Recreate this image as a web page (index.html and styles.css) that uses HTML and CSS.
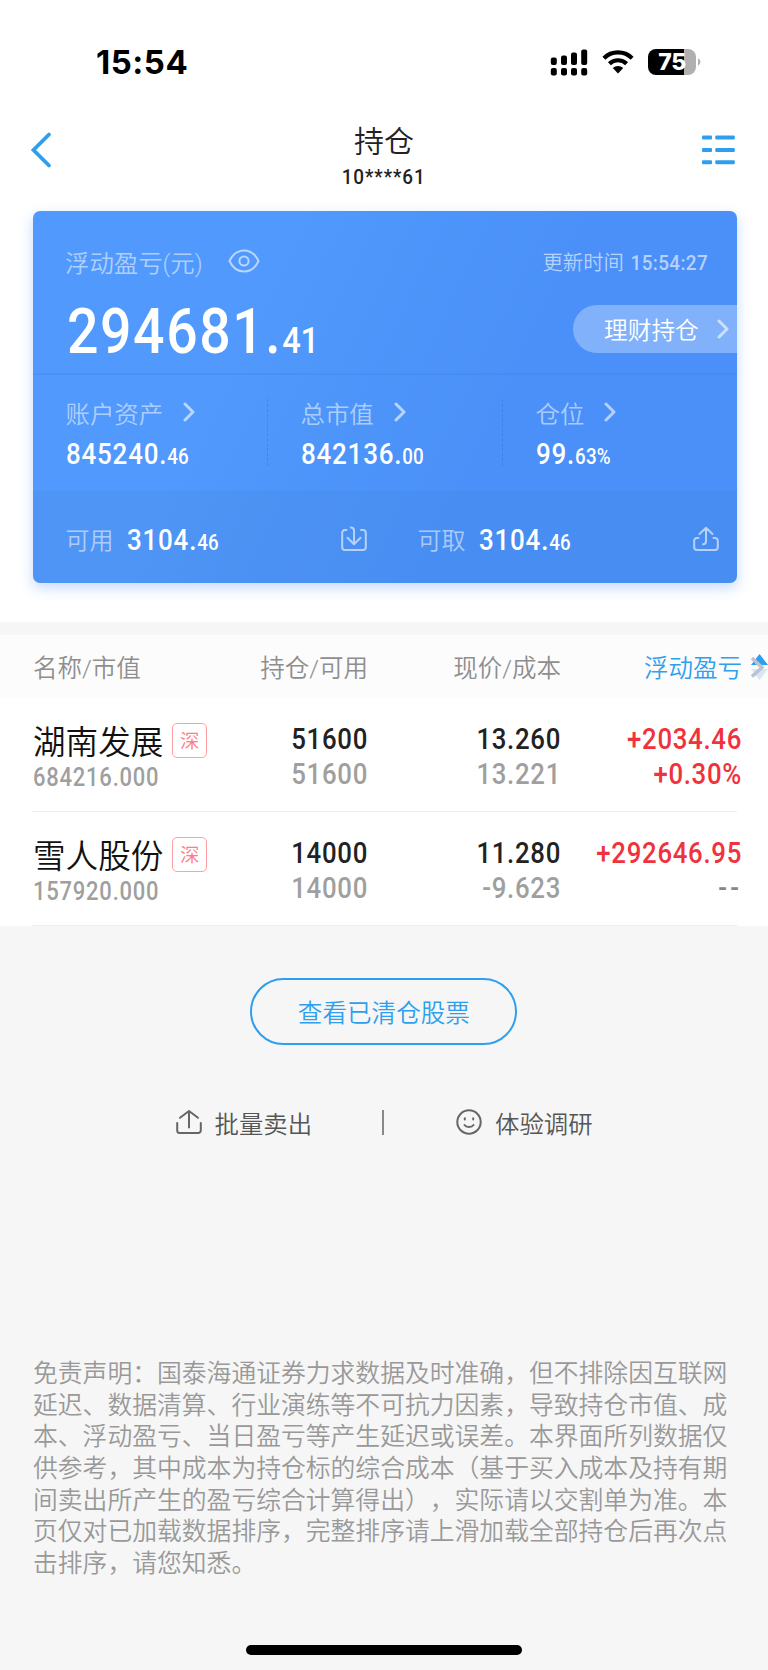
FILE: index.html
```html
<!DOCTYPE html>
<html lang="zh-CN">
<head>
  <meta charset="UTF-8" />
  <meta name="viewport" content="width=device-width, initial-scale=1.0"/>
  <title>持仓</title>
  <link rel="stylesheet" href="styles.css">
</head>
<body>
  <div class="top">
    <div class="status-bar">
      <span class="clock">15:54</span>
      <div class="status-icons">
        <svg class="signal" width="38" height="28" viewBox="0 0 38 28">
          <rect x="0.8" y="8.5" width="6" height="7.5" rx="2"/>
          <rect x="11" y="6.5" width="6" height="9.5" rx="2"/>
          <rect x="21" y="3.5" width="6" height="12.5" rx="2"/>
          <rect x="31.2" y="0.5" width="6" height="15.5" rx="2"/>
          <rect x="0.8" y="19" width="6" height="7.4" rx="2"/>
          <rect x="11" y="19" width="6" height="7.4" rx="2"/>
          <rect x="21" y="19" width="6" height="7.4" rx="2"/>
          <rect x="31.2" y="19" width="6" height="7.4" rx="2"/>
        </svg>
        <svg class="wifi" width="32" height="26" viewBox="0 0 32 26">
          <path d="M1.9 9.2a20.2 20.2 0 0 1 28.2 0M7.4 14.7a12.4 12.4 0 0 1 17.2 0" fill="none" stroke="#000" stroke-width="4.2"/>
          <path d="M10.8 19a7.6 7.6 0 0 1 10.4 0L16 24.6z"/>
        </svg>
        <div class="battery"><span>75</span></div>
        <svg class="battery-cap" width="3" height="8" viewBox="0 0 3 8"><path d="M0 0.3a4 4 0 0 1 0 7.4z" fill="#b0b0b0"/></svg>
      </div>
    </div>

    <div class="nav">
      <svg class="back" width="22" height="38" viewBox="0 0 22 38">
        <path d="M19 3.5L3.5 19l15.5 15.5" fill="none" stroke="#2e9fee" stroke-width="3.8" stroke-linecap="round"/>
      </svg>
      <div class="title">
        <h1>持仓</h1>
        <p>10****61</p>
      </div>
      <svg class="list" width="33" height="30" viewBox="0 0 33 30" fill="#2e9fee">
        <rect x="0" y="0.5" width="10" height="4" rx="1"/><rect x="13.3" y="0.5" width="19.5" height="4" rx="1"/>
        <rect x="0" y="13" width="10" height="4" rx="1"/><rect x="13.3" y="13" width="19.5" height="4" rx="1"/>
        <rect x="0" y="25.3" width="10" height="4" rx="1"/><rect x="13.3" y="25.3" width="19.5" height="4" rx="1"/>
      </svg>
    </div>

    <div class="card">
      <div class="summary">
        <div class="summary-head">
          <span class="label">浮动盈亏(元)</span>
          <svg class="eye" width="32" height="24" viewBox="0 0 32 24">
            <path d="M1.5 12C4.5 5.5 9 1.5 16 1.5S27.5 5.5 30.5 12C27.5 18.5 23 22.5 16 22.5S4.5 18.5 1.5 12z"/>
            <circle cx="16" cy="12" r="4.6"/>
          </svg>
          <span class="update">更新时间<b>15:54:27</b></span>
        </div>
        <div class="summary-main">
          <span class="profit">294681.<small>41</small></span>
          <span class="pill">理财持仓
            <svg class="arrow" width="12" height="20" viewBox="0 0 12 20"><path d="M2 2l8 8-8 8"/></svg>
          </span>
        </div>
      </div>

      <div class="stats">
        <div class="stat">
          <span class="label">账户资产 <svg class="arrow" width="12" height="20" viewBox="0 0 12 20"><path d="M2 2l8 8-8 8"/></svg></span>
          <span class="num">845240.<small>46</small></span>
        </div>
        <div class="stat">
          <span class="label">总市值 <svg class="arrow" width="12" height="20" viewBox="0 0 12 20"><path d="M2 2l8 8-8 8"/></svg></span>
          <span class="num">842136.<small>00</small></span>
        </div>
        <div class="stat">
          <span class="label">仓位 <svg class="arrow" width="12" height="20" viewBox="0 0 12 20"><path d="M2 2l8 8-8 8"/></svg></span>
          <span class="num">99.<small>63%</small></span>
        </div>
      </div>

      <div class="funds">
        <div class="fund">
          <span class="label">可用</span>
          <span class="num">3104.<small>46</small></span>
          <svg class="fund-icon" width="26" height="26" viewBox="0 0 26 26">
            <path d="M5.5 4H4a2.8 2.8 0 0 0-2.8 2.8v14.4A2.8 2.8 0 0 0 4 24h18a2.8 2.8 0 0 0 2.8-2.8V6.8A2.8 2.8 0 0 0 22 4h-2M9.8 1.5c2.4 0 3.2 1 3.2 3V18M6.5 11.8L13 18.2l6.5-6.4"/>
          </svg>
        </div>
        <div class="fund">
          <span class="label">可取</span>
          <span class="num">3104.<small>46</small></span>
          <svg class="fund-icon" width="26" height="26" viewBox="0 0 26 26">
            <path d="M5.5 12H4a2.8 2.8 0 0 0-2.8 2.8v6.4A2.8 2.8 0 0 0 4 24h18a2.8 2.8 0 0 0 2.8-2.8v-6.4A2.8 2.8 0 0 0 22 12h-1.5M10 18.3c2.2 0 3-1.3 3-3.3V2M6.5 8L13 1.8 19.5 8"/>
          </svg>
        </div>
      </div>
    </div>
  </div>

  <div class="holdings">
    <div class="row head">
      <span>名称/市值</span>
      <span>持仓/可用</span>
      <span>现价/成本</span>
      <span class="active">浮动盈亏</span>
      <svg class="sort" width="17" height="28" viewBox="0 0 17 28">
        <path d="M8.5 0L17 11H0z" fill="#2e9fee"/>
        <path d="M0 15h17L8.5 26z" fill="#dce6f0"/>
        <path d="M1 4l10 9.5L1 22.5" fill="none" stroke="#b9c3d2" stroke-width="3.5"/>
      </svg>
    </div>

    <div class="row">
      <div class="stock">
        <div class="name">湖南发展<i class="tag">深</i></div>
        <div class="value">684216.000</div>
      </div>
      <div class="cell"><p>51600</p><p class="sub">51600</p></div>
      <div class="cell"><p>13.260</p><p class="sub">13.221</p></div>
      <div class="cell up"><p>+2034.46</p><p>+0.30%</p></div>
    </div>

    <div class="row">
      <div class="stock">
        <div class="name">雪人股份<i class="tag">深</i></div>
        <div class="value">157920.000</div>
      </div>
      <div class="cell"><p>14000</p><p class="sub">14000</p></div>
      <div class="cell"><p>11.280</p><p class="sub">-9.623</p></div>
      <div class="cell up"><p>+292646.95</p><p class="none">--</p></div>
    </div>
  </div>

  <button class="cleared">查看已清仓股票</button>

  <div class="actions">
    <div class="action">
      <svg width="26" height="26" viewBox="0 0 26 26">
        <path d="M1.2 14v7.5A2.5 2.5 0 0 0 3.7 24h18.6a2.5 2.5 0 0 0 2.5-2.5V14M13 18.5V2M4 8.8L13 2l9 6.8"/>
      </svg>
      <span>批量卖出</span>
    </div>
    <div class="divider"></div>
    <div class="action">
      <svg width="26" height="26" viewBox="0 0 26 26">
        <circle cx="13" cy="13" r="11.7"/>
        <path d="M8.5 16c1.8 2.6 7.2 2.6 9 0M8.8 9.3v1.2M17.2 9.3v1.2"/>
      </svg>
      <span>体验调研</span>
    </div>
  </div>

  <p class="disclaimer">
    免责声明：国泰海通证券力求数据及时准确，但不排除因互联网<br>
    延迟、数据清算、行业演练等不可抗力因素，导致持仓市值、成<br>
    本、浮动盈亏、当日盈亏等产生延迟或误差。本界面所列数据仅<br>
    供参考，其中成本为持仓标的综合成本（基于买入成本及持有期<br>
    间卖出所产生的盈亏综合计算得出），实际请以交割单为准。本<br>
    页仅对已加载数据排序，完整排序请上滑加载全部持仓后再次点<br>
    击排序，请您知悉。
  </p>

  <div class="home-bar"></div>
</body>
</html>
```
FILE: styles.css
```css
* {
  box-sizing: border-box;
}
body {
  margin: 0;
  width: 768px;
  height: 1670px;
  display: flex;
  flex-direction: column;
  overflow: hidden;
  background-color: #f6f6f6;
  color: #222;
  font-family: Roboto, "Noto Sans CJK SC", sans-serif;
  font-weight: 350;
  text-spacing-trim: space-all;
}
h1, p {
  margin: 0;
}
svg {
  display: block;
  flex: none;
}
.top {
  height: 622px;
  background-color: #fff;
}

/* status bar */
.status-bar {
  height: 124px;
  padding: 41px 67px 0 96px;
  display: flex;
  justify-content: space-between;
  align-items: flex-start;
}
.clock {
  font: 700 33px/42px Inter, sans-serif;
  color: #000;
  letter-spacing: 0.5px;
}
.status-icons {
  display: flex;
  padding-top: 8px;
}
.wifi {
  margin-left: 14px;
}
.battery {
  width: 48px;
  height: 26px;
  margin-left: 14px;
  border-radius: 8px;
  background: linear-gradient(90deg, #000 75%, #b0b0b0 75%);
  color: #fff;
  font: 800 23px/26px Inter, sans-serif;
  text-align: center;
  letter-spacing: -0.5px;
}
.battery-cap {
  margin: 9px 0 0 2px;
}

/* title */
.nav {
  height: 87px;
  padding: 0 33px 0 30px;
  display: flex;
  justify-content: space-between;
}
.back {
  margin-top: 7px;
}
.list {
  margin-top: 11px;
}
.title {
  text-align: center;
  padding-left: 14px;
}
.title h1 {
  font-size: 30px;
  font-weight: 350;
  line-height: 36px;
}
.title p {
  font-size: 21px;
  font-weight: 500;
  line-height: 22px;
  margin-top: 6px;
  letter-spacing: 0.05em;
  transform: scaleX(0.9);
}

/* blue card */
.card {
  width: 704px;
  height: 372px;
  margin-left: 33px;
  border-radius: 7px;
  overflow: hidden;
  color: #fff;
  background: linear-gradient(115deg, #5199fc 30%, #4a90f8 65%);
  box-shadow: 0 5px 14px rgba(74, 144, 248, 0.32);
}
.label {
  font-size: 24.4px;
  color: rgba(255, 255, 255, 0.55);
}
.arrow path {
  fill: none;
  stroke: rgba(255, 255, 255, 0.6);
  stroke-width: 3;
  stroke-linecap: round;
  stroke-linejoin: round;
}
.summary {
  height: 164px;
  border-bottom: 2px solid rgba(50, 120, 220, 0.2);
  padding-top: 34px;
}
.summary-head {
  height: 32px;
  padding: 0 29px 0 32px;
  display: flex;
  align-items: center;
}
.eye {
  margin-left: 25px;
  margin-top: -1px;
  fill: none;
  stroke: rgba(255, 255, 255, 0.6);
  stroke-width: 2;
}
.update {
  margin-left: auto;
  font-size: 20.4px;
  color: rgba(255, 255, 255, 0.6);
}
.update b {
  display: inline-block;
  margin-left: -2px;
  font-weight: 500;
  font-size: 21px;
  letter-spacing: 0.02em;
  transform: scaleX(0.9);
  transform-origin: right;
}
.summary-main {
  display: flex;
  justify-content: space-between;
  align-items: flex-start;
  padding: 27px 0 0 34px;
}
.profit {
  font-size: 63px;
  line-height: 54px;
  margin-top: 1px;
  font-weight: 500;
  letter-spacing: 0.028em;
  transform: scaleX(0.88);
  transform-origin: left;
}
.profit small {
  font-size: 37px;
  letter-spacing: -0.01em;
}
.pill {
  width: 164px;
  height: 48px;
  margin-top: 1px;
  padding-left: 31px;
  border-radius: 24px 0 0 24px;
  background-color: rgba(255, 255, 255, 0.3);
  display: flex;
  align-items: center;
  font-size: 23.7px;
}
.pill .arrow {
  margin-left: 18px;
}
.stats {
  height: 116px;
  display: grid;
  grid-template-columns: 235px 235px 234px;
  padding-top: 24px;
}
.stat {
  height: 67px;
  padding-left: 32.5px;
  border-right: 1px dashed rgba(40, 100, 200, 0.3);
}
.stat:last-child {
  border: none;
}
.stat .label {
  display: flex;
  align-items: center;
  gap: 20px;
  height: 26px;
}
.num {
  display: block;
  font-size: 29.5px;
  line-height: 34px;
  font-weight: 500;
  letter-spacing: 0.03em;
  transform: scaleX(0.88);
  transform-origin: left;
}
.num small {
  font-size: 21.3px;
  letter-spacing: 0.01em;
}
.stat .num {
  margin-top: 12px;
}
.funds {
  height: 92px;
  display: grid;
  grid-template-columns: 1fr 1fr;
  background-color: rgba(60, 120, 200, 0.13);
}
.fund {
  display: flex;
  align-items: center;
  padding: 4px 18px 0 32.5px;
}
.fund .label {
  font-size: 24px;
  margin-top: -1px;
}
.fund .num {
  margin-left: 13px;
  margin-top: 4px;
}
.fund-icon {
  margin-left: auto;
  fill: none;
  stroke: rgba(255, 255, 255, 0.6);
  stroke-width: 2;
  stroke-linecap: round;
  stroke-linejoin: round;
}

/* holdings */
.holdings {
  margin-top: 13px;
  background-color: #fff;
}
.row {
  position: relative;
  height: 114px;
  padding: 0 26px 0 33px;
  display: grid;
  grid-template-columns: 184px 151px 193px 181px;
}
.row:not(.head)::after {
  content: "";
  position: absolute;
  left: 32px;
  right: 31px;
  bottom: 0;
  height: 1px;
  background-color: #ededed;
}
.row.head {
  height: 63px;
  background-color: #fcfcfc;
  color: #8e8e8e;
  font-size: 24.5px;
  line-height: 68px;
}
.head span + span {
  text-align: right;
}
.head .active {
  color: #2e9fee;
}
.sort {
  position: absolute;
  left: 751px;
  top: 19px;
}
.stock {
  padding-top: 22px;
}
.name {
  display: flex;
  align-items: center;
  height: 40px;
  padding-top: 6px;
  font-size: 32.6px;
  line-height: 34px;
  color: #111;
  white-space: nowrap;
}
.tag {
  flex: none;
  width: 35px;
  height: 35px;
  margin-left: 9px;
  margin-top: -5px;
  border: 1.5px solid #ff9ea3;
  border-radius: 5px;
  color: #ff7d84;
  font-size: 19.5px;
  line-height: 35px;
  font-style: normal;
  text-align: center;
}
.value {
  font-size: 25px;
  line-height: 24px;
  margin-top: 6px;
  font-weight: 500;
  color: #9f9f9f;
  letter-spacing: 0.035em;
  transform: scaleX(0.88);
  transform-origin: left;
}
.cell {
  padding-top: 24px;
  text-align: right;
  font-size: 29.3px;
  line-height: 35px;
  font-weight: 500;
  letter-spacing: 0.027em;
}
.cell p {
  transform: scaleX(0.88);
  transform-origin: right;
}
.cell .sub {
  color: #9f9f9f;
}
.up {
  color: #f0323c;
}
.up .none {
  color: #888;
  letter-spacing: 0.12em;
}

/* bottom part */
.cleared {
  flex: none;
  width: 267px;
  height: 67px;
  margin: 52px auto 0 250.4px;
  padding: 0;
  border: 2px solid #2e9fee;
  border-radius: 34px;
  background: none;
  color: #2e9fee;
  font: 350 24.6px/67px Roboto, "Noto Sans CJK SC", sans-serif;
}
.actions {
  display: flex;
  align-items: center;
  height: 30px;
  margin-top: 62px;
  padding-left: 175.5px;
  color: #555;
  font-size: 24.4px;
  line-height: 28px;
}
.action {
  display: flex;
  align-items: center;
  gap: 13px;
}
.action span {
  padding-top: 5px;
}
.action svg {
  fill: none;
  stroke: #666;
  stroke-width: 2;
  stroke-linecap: round;
  stroke-linejoin: round;
}
.divider {
  width: 2px;
  height: 25px;
  margin: 0 72px 0 70px;
  background-color: #888;
}
.disclaimer {
  margin: 221px 0 0 33px;
  font-size: 24.8px;
  line-height: 31.65px;
  color: #999;
  white-space: nowrap;
}
.home-bar {
  width: 276px;
  height: 10px;
  margin: auto auto 15px;
  border-radius: 5px;
  background-color: #000;
}
```
